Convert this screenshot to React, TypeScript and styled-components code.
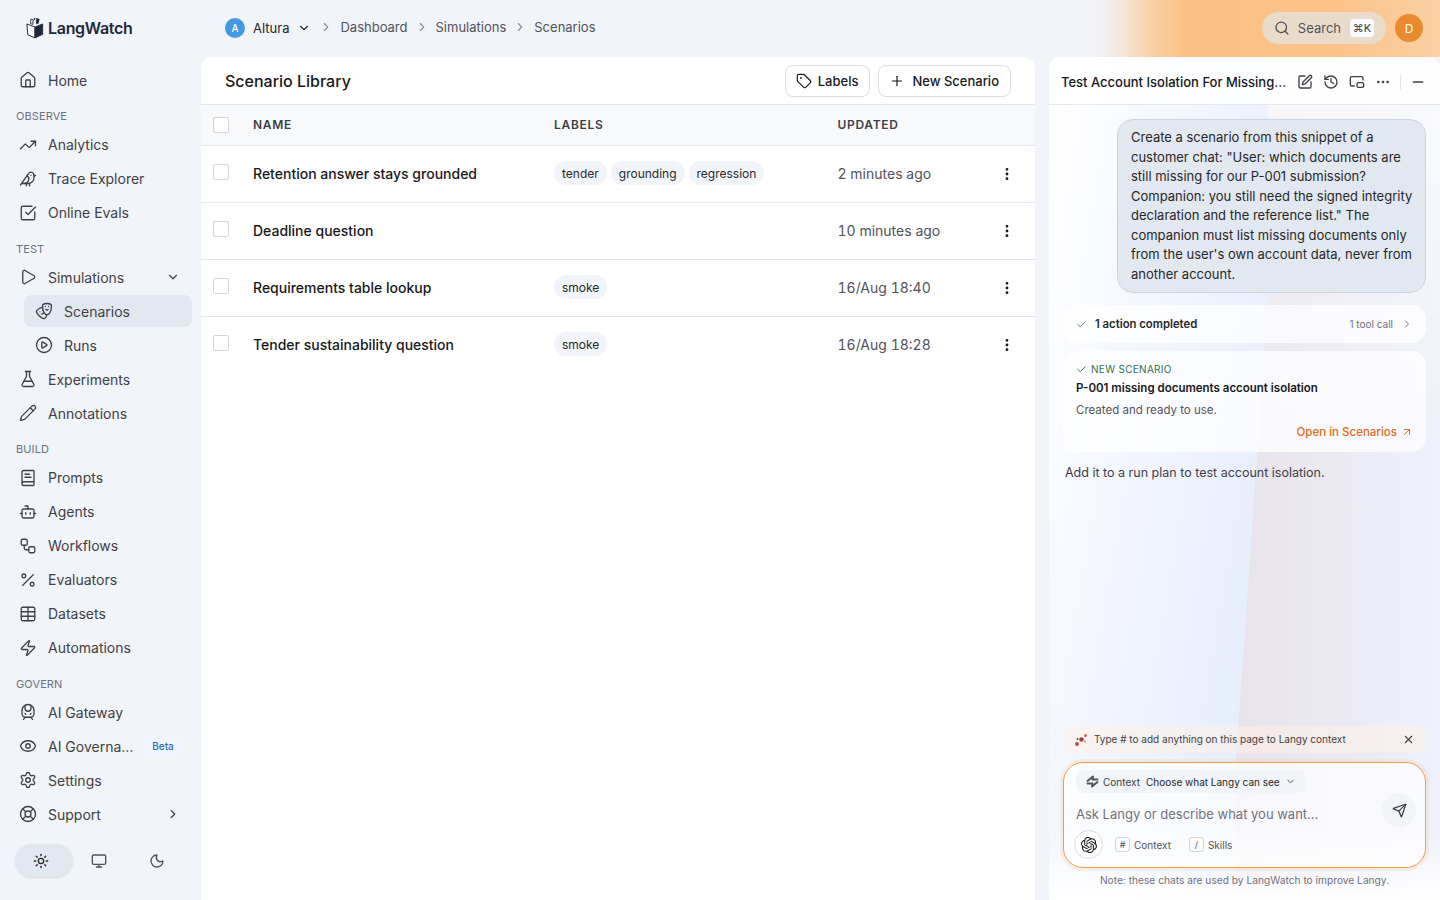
import React from "react";
import styled, { createGlobalStyle } from "styled-components";
import {
  ArrowUpRight,
  Bird,
  BookText,
  Bot,
  Check,
  ChevronDown,
  ChevronRight,
  CirclePlay,
  Drama,
  Ellipsis,
  EllipsisVertical,
  Eye,
  FlaskConical,
  History,
  House,
  LifeBuoy,
  Minus,
  Monitor,
  Moon,
  Pencil,
  Percent,
  PictureInPicture2,
  Play,
  Plus,
  Search,
  Send,
  Settings,
  SquareCheckBig,
  SquarePen,
  Sun,
  Table,
  Tag,
  TrainFront,
  TrendingUp,
  Workflow,
  X,
  Zap,
} from "lucide-react";
import { SiOpenai } from "react-icons/si";

const GlobalStyle = createGlobalStyle`
  html, body, #root {
    height: 100%;
  }
  body {
    margin: 0;
    background: #f1f4f9;
    color: #18181b;
    font-family: Inter, "Liberation Sans", sans-serif;
    overflow: hidden;
  }
  * {
    box-sizing: border-box;
  }
`;

const Page = styled.div`
  display: flex;
  height: 900px;
  width: 1440px;
  overflow: hidden;
`;

const Sidebar = styled.aside`
  width: 201px;
  flex-shrink: 0;
  display: flex;
  flex-direction: column;
`;

const LogoRow = styled.div`
  height: 63px;
  padding: 12px 0 0 26px;
  display: flex;
  align-items: flex-start;
  gap: 4px;
`;

const LogoText = styled.span`
  font-size: 16px;
  line-height: 32px;
  font-weight: 600;
  letter-spacing: -0.3px;
  color: #1e293b;
`;

const Nav = styled.nav`
  display: flex;
  flex-direction: column;
`;

const NavItem = styled.div<{ $sub?: boolean; $active?: boolean }>`
  height: 32px;
  margin: 1px 9px 1px ${(p) => (p.$sub ? "24px" : "8px")};
  padding: 0 12px 0 11px;
  display: flex;
  align-items: center;
  gap: 11px;
  border-radius: 8px;
  font-size: 14px;
  color: #3f3f46;
  background: ${(p) => (p.$active ? "#e2e8f0" : "transparent")};

  svg {
    flex-shrink: 0;
    color: #3f3f46;
  }
`;

const NavLabel = styled.span`
  flex: 1;
  min-width: 0;
  overflow: hidden;
  white-space: nowrap;
  text-overflow: ellipsis;
`;

const BetaBadge = styled.span`
  width: 34px;
  height: 18px;
  display: flex;
  align-items: center;
  justify-content: center;
  flex-shrink: 0;
  border-radius: 4px;
  font-size: 10px;
  font-weight: 500;
  color: #2b6cb0;
  background: #eff6ff;
`;

const SectionLabel = styled.div`
  height: 30.5px;
  padding: 12px 0 0 16px;
  font-size: 11px;
  line-height: 14px;
  color: #6b7280;
  letter-spacing: 0.1px;
`;

const ThemeSwitch = styled.div`
  margin: 13px 0 0 15px;
  display: flex;
`;

const ThemeOption = styled.div<{ $active?: boolean }>`
  width: 58px;
  height: 33px;
  padding-right: 6px;
  display: flex;
  align-items: center;
  justify-content: center;
  border-radius: 17px;
  background: ${(p) => (p.$active ? "#e2e8f0" : "transparent")};
  box-shadow: ${(p) => (p.$active ? "0 1px 2px rgba(15, 23, 42, 0.1)" : "none")};

  svg {
    color: ${(p) => (p.$active ? "#27272a" : "#52525b")};
  }
`;

const Content = styled.div`
  flex: 1;
  min-width: 0;
  display: flex;
  flex-direction: column;
`;

const Header = styled.header`
  position: relative;
  height: 57px;
  flex-shrink: 0;
  padding: 0 17px 1px 24px;
  display: flex;
  align-items: center;
  font-size: 13px;

  &::before {
    content: "";
    position: absolute;
    top: 0;
    bottom: 0;
    right: 0;
    width: 360px;
    background: linear-gradient(
      to right,
      rgba(253, 190, 120, 0) 0%,
      rgba(253, 190, 120, 0.05) 6%,
      rgba(253, 190, 120, 0.25) 12%,
      rgba(252, 188, 118, 0.65) 20%,
      rgba(252, 190, 125, 0.95) 30%,
      #fcc288 70%,
      #fbd0a4 100%
    );
  }
`;

const OrgAvatar = styled.span`
  width: 20px;
  height: 20px;
  margin-right: 8px;
  display: flex;
  align-items: center;
  justify-content: center;
  border-radius: 50%;
  background: #4299e1;
  color: #fff;
  font-size: 10px;
  font-weight: 500;
`;

const OrgName = styled.span`
  color: #27272a;
  margin-right: 8px;
`;

const Crumbs = styled.div`
  display: flex;
  align-items: center;
  gap: 7px;
  margin-left: 8px;
  color: #52525b;
  margin-top: -2px;

  svg {
    color: #8a8f98;
  }
`;

const HeaderRight = styled.div`
  position: relative;
  margin-left: auto;
  display: flex;
  align-items: center;
  gap: 9px;
`;

const SearchPill = styled.div`
  width: 124px;
  height: 32px;
  padding: 0 12px;
  display: flex;
  align-items: center;
  gap: 8px;
  border-radius: 16px;
  background: rgba(229, 223, 214, 0.85);
  color: #52525b;
`;

const Kbd = styled.span`
  margin-left: 1px;
  width: 24px;
  height: 18px;
  flex-shrink: 0;
  display: flex;
  align-items: center;
  justify-content: center;
  border-radius: 4px;
  background: #f8fafc;
  font-size: 11px;
  color: #3f3f46;
`;

const UserAvatar = styled.span`
  width: 28px;
  height: 28px;
  display: flex;
  align-items: center;
  justify-content: center;
  border-radius: 50%;
  background: #ea8a2e;
  color: #fff;
  font-size: 12px;
`;

const Panels = styled.div`
  flex: 1;
  min-height: 0;
  display: flex;
  gap: 14px;
`;

const MainCard = styled.main`
  width: 834px;
  flex-shrink: 0;
  background: #fff;
  border-radius: 12px 12px 0 0;
  overflow: hidden;
`;

const CardHeader = styled.div`
  height: 48px;
  padding: 0 24px;
  display: flex;
  align-items: center;
  gap: 8px;
  border-bottom: 1px solid #e4e7ec;
`;

const CardTitle = styled.h1`
  flex: 1;
  margin: 0;
  font-size: 16px;
  font-weight: 500;
  color: #18181b;
`;

const OutlineButton = styled.button<{ $gap: number }>`
  height: 32px;
  padding: 0 11px 0 10px;
  display: flex;
  align-items: center;
  gap: ${(p) => p.$gap}px;
  border: 1px solid #d9dee6;
  border-radius: 8px;
  background: #fff;
  font-family: inherit;
  font-size: 13px;
  font-weight: 500;
  color: #18181b;
`;

const columns = "52px 301px 283.5px 1fr 56px";

const HeadRow = styled.div`
  height: 41px;
  padding-bottom: 2px;
  display: grid;
  grid-template-columns: ${columns};
  align-items: center;
  background: #f8f9fb;
  border-bottom: 1px solid #e4e7ec;
  font-size: 12px;
  font-weight: 600;
  letter-spacing: 0.7px;
  color: #3f3f46;
`;

const Row = styled.div`
  height: 57px;
  padding-bottom: 2px;
  display: grid;
  grid-template-columns: ${columns};
  align-items: center;
  border-bottom: 1px solid #e4e7ec;
  font-size: 14px;

  &:last-child {
    border-bottom-color: transparent;
  }
`;

const CheckBox = styled.span<{ $head?: boolean }>`
  width: 16px;
  height: 16px;
  margin-left: 12px;
  margin-top: ${(p) => (p.$head ? "2px" : "0")};
  margin-bottom: ${(p) => (p.$head ? "0" : "2px")};
  border: 1px solid #d4d4d8;
  border-radius: 2px;
  background: #fff;
`;

const NameCell = styled.span`
  font-weight: 500;
  color: #18181b;
`;

const LabelsCell = styled.div`
  display: flex;
  gap: 4px;
`;

const LabelPill = styled.span`
  height: 24px;
  padding: 0 8px;
  display: flex;
  align-items: center;
  border-radius: 12px;
  background: #f1f4f9;
  font-size: 12px;
  color: #27272a;
`;

const UpdatedCell = styled.span`
  color: #52525b;
  font-variant-numeric: tabular-nums;
`;

const DotsCell = styled.div`
  margin-top: 2px;
  display: flex;
  justify-content: center;
  color: #18181b;
`;

const ChatPanel = styled.section`
  position: relative;
  flex: 1;
  min-width: 0;
  display: flex;
  flex-direction: column;
  border-radius: 12px 12px 0 0;
  overflow: hidden;
  background: linear-gradient(100deg, #ffffff 2%, #f3f6fe 28%, #e7eefc 54%);

  &::before {
    content: "";
    position: absolute;
    inset: 0;
    clip-path: polygon(219px 0, 100% 0, 100% 100%, 185px 100%, 187px 703px, 219px 243px);
    background:
      linear-gradient(to bottom, rgba(255, 255, 255, 0.75) 0, rgba(255, 255, 255, 0.25) 30%, rgba(255, 255, 255, 0) 46%),
      linear-gradient(to right, #f2e4df 0, #e8e3ec 50%, #eef1fb 100%);
  }

  &::after {
    content: "";
    position: absolute;
    left: 0;
    right: 0;
    bottom: 0;
    height: 70px;
    background: linear-gradient(to bottom, rgba(255, 255, 255, 0), #ffffff);
  }

  & > * {
    position: relative;
    z-index: 1;
  }
`;

const ChatHeader = styled.div`
  height: 48px;
  flex-shrink: 0;
  padding: 2px 0 0 12px;
  display: flex;
  align-items: center;
  border-bottom: 1px solid #e4e7ec;
  background: rgba(255, 255, 255, 0.8);
`;

const ChatTitle = styled.span`
  width: 228px;
  flex-shrink: 0;
  margin-right: 3px;
  overflow: hidden;
  white-space: nowrap;
  text-overflow: ellipsis;
  font-size: 13px;
  font-weight: 500;
  color: #18181b;
`;

const HeadIcon = styled.span`
  width: 26px;
  flex-shrink: 0;
  display: flex;
  justify-content: center;
  color: #3f3f46;
`;

const HeadDivider = styled.span`
  width: 1px;
  height: 16px;
  margin: 0 4px 0 4px;
  background: #e4e7ec;
`;

const Messages = styled.div`
  flex: 1;
  min-height: 0;
  padding: 14px 14px 0;
  display: flex;
  flex-direction: column;
`;

const UserBubble = styled.div`
  align-self: flex-end;
  width: 309px;
  padding: 8px 10px 8px 13px;
  border: 1px solid #cbd5e1;
  border-radius: 16px;
  background: #e2e8f0;
  font-size: 13px;
  line-height: 19.5px;
  color: #27272a;
`;

const ActionRow = styled.div`
  height: 38px;
  flex-shrink: 0;
  margin-top: 12px;
  padding: 0 13px;
  display: flex;
  align-items: center;
  border-radius: 14px;
  background: rgba(255, 255, 255, 0.72);
  font-size: 11.3px;
  font-weight: 600;
  color: #27272a;

  svg {
    color: #3d7a5c;
  }
`;

const ActionTitle = styled.span`
  margin-left: 8px;
  flex: 1;
`;

const ToolCount = styled.span`
  margin-right: 8px;
  font-size: 10px;
  font-weight: 400;
  color: #71717a;
`;

const ResultCard = styled.div`
  margin-top: 8px;
  height: 101px;
  flex-shrink: 0;
  padding: 11px 13px 0;
  border-radius: 14px;
  background: rgba(255, 255, 255, 0.72);
`;

const ResultKicker = styled.div`
  display: flex;
  align-items: center;
  gap: 4px;
  font-size: 10px;
  line-height: 14px;
  letter-spacing: 0.3px;
  color: #2f6f52;
`;

const ResultTitle = styled.div`
  margin-top: 4px;
  font-size: 11.5px;
  line-height: 16px;
  font-weight: 600;
  color: #18181b;
`;

const ResultText = styled.div`
  margin-top: 6px;
  font-size: 11.5px;
  line-height: 16px;
  color: #52525b;
`;

const ResultLink = styled.div`
  margin-top: 6px;
  display: flex;
  align-items: center;
  justify-content: flex-end;
  gap: 4px;
  font-size: 11.5px;
  line-height: 16px;
  font-weight: 500;
  color: #dd6b20;
`;

const Reply = styled.p`
  margin: 12px 0 0 2px;
  font-size: 12.5px;
  line-height: 18px;
  color: #3f3f46;
`;

const Composer = styled.div`
  padding: 0 14px;
`;

const Tip = styled.div`
  height: 27px;
  padding: 0 11px;
  display: flex;
  align-items: center;
  gap: 6px;
  border-radius: 8px;
  background: rgba(253, 240, 230, 0.55);
  font-size: 10px;
  color: #3f3f46;
`;

const TipText = styled.span`
  flex: 1;
  margin-top: -1px;
`;

const InputBox = styled.div`
  height: 106px;
  margin-top: 9px;
  padding: 7px 9px 0 12px;
  border: 1.5px solid #ed9c4f;
  border-radius: 20px;
  box-shadow: 0 0 0 3px rgba(253, 200, 150, 0.25);
  background: rgba(255, 255, 255, 0.72);
  display: flex;
  flex-direction: column;
`;

const ContextChip = styled.div`
  width: 230px;
  height: 23px;
  flex-shrink: 0;
  padding: 0 10px;
  display: flex;
  align-items: center;
  gap: 4px;
  border-radius: 8px;
  background: #f1f4f9;
  font-size: 10px;
  white-space: nowrap;
  color: #3f3f46;
  svg {
    flex-shrink: 0;
    color: #52525b;
  }
`;

const ChipValue = styled.span`
  margin: 0 1px 0 2px;
  color: #27272a;
`;

const InputRow = styled.div`
  flex: 1;
  display: flex;
  align-items: flex-start;
  justify-content: space-between;
`;

const Placeholder = styled.span`
  margin-top: 12px;
  font-size: 13px;
  line-height: 18px;
  color: #71717a;
`;

const SendButton = styled.span`
  width: 34px;
  height: 34px;
  display: flex;
  align-items: center;
  justify-content: center;
  border-radius: 50%;
  background: #f1f4f9;
  color: #3f3f46;
`;

const Toolbar = styled.div`
  margin: 0 0 8px -2px;
  display: flex;
  align-items: center;
`;

const ModelButton = styled.span`
  width: 29px;
  height: 29px;
  margin-right: 12px;
  display: flex;
  align-items: center;
  justify-content: center;
  border: 1px solid #d9dee6;
  border-radius: 50%;
  background: #fff;
  color: #18181b;
`;

const ToolKey = styled.span`
  width: 15px;
  height: 15px;
  margin-right: 4px;
  display: flex;
  align-items: center;
  justify-content: center;
  border: 1px solid #d4d4d8;
  border-radius: 3px;
  font-size: 9px;
  color: #52525b;
`;

const ToolLabel = styled.span`
  margin-right: 18px;
  font-size: 10px;
  color: #52525b;
`;

const Note = styled.div`
  height: 32px;
  padding-top: 6px;
  text-align: center;
  font-size: 10.2px;
  line-height: 13px;
  color: #71717a;
`;

function LogoMark() {
  return (
    <svg width="18" height="22" viewBox="0 0 20 24" fill="none" style={{ marginTop: 5 }}>
      <path d="M1 7.5 L10 11 V23 L2 19.5 Z" fill="#fff" stroke="#1e293b" strokeWidth="1.1" strokeLinejoin="round" />
      <path d="M10 11 L18.5 7.5 V19 L10 23 Z" fill="#1e293b" stroke="#1e293b" strokeWidth="1" strokeLinejoin="round" />
      <path d="M5 7 L5.5 2 L8 3 L7.5 8 Z" fill="#fff" stroke="#1e293b" strokeWidth="1" strokeLinejoin="round" />
      <path d="M11 7.5 L11.5 1 L15 2 L14 7 Z" fill="#1e293b" />
      <circle cx="9.5" cy="2" r="1" fill="#1e293b" />
    </svg>
  );
}

function LangySpark() {
  return (
    <svg width="14" height="14" viewBox="0 0 14 14" fill="none" style={{ flexShrink: 0 }}>
      <circle cx="3" cy="11" r="2" fill="#b4534a" />
      <circle cx="7.5" cy="6.5" r="2.2" fill="#a33d3d" />
      <circle cx="11.5" cy="2.5" r="1.5" fill="#c4694f" />
      <circle cx="3.5" cy="6" r="1" fill="#7a4a4a" />
      <circle cx="11" cy="8.5" r="1" fill="#d98a5f" />
    </svg>
  );
}

function ContextGlyph() {
  return (
    <svg width="13" height="13" viewBox="0 0 13 13" fill="none" stroke="#52525b" strokeWidth="1.9" strokeLinejoin="round" strokeLinecap="round">
      <path d="M1.5 6 L7 1.5 L6.5 4.5 L11.5 4.5" />
      <path d="M11.5 7 L6 11.5 L6.5 8.5 L1.5 8.5" />
    </svg>
  );
}

type NavEntry = { label: string; icon: React.ReactNode; sub?: boolean; active?: boolean; trail?: React.ReactNode };

const ic = (I: typeof House) => <I size={18} strokeWidth={1.75} />;

const observe: NavEntry[] = [
  { label: "Analytics", icon: ic(TrendingUp) },
  { label: "Trace Explorer", icon: ic(Bird) },
  { label: "Online Evals", icon: ic(SquareCheckBig) },
];

const test: NavEntry[] = [
  { label: "Simulations", icon: ic(Play), trail: <ChevronDown size={14} /> },
  { label: "Scenarios", icon: ic(Drama), sub: true, active: true },
  { label: "Runs", icon: ic(CirclePlay), sub: true },
  { label: "Experiments", icon: ic(FlaskConical) },
  { label: "Annotations", icon: ic(Pencil) },
];

const build: NavEntry[] = [
  { label: "Prompts", icon: ic(BookText) },
  { label: "Agents", icon: ic(Bot) },
  { label: "Workflows", icon: ic(Workflow) },
  { label: "Evaluators", icon: ic(Percent) },
  { label: "Datasets", icon: ic(Table) },
  { label: "Automations", icon: ic(Zap) },
];

const govern: NavEntry[] = [
  { label: "AI Gateway", icon: ic(TrainFront) },
  { label: "AI Governance", icon: ic(Eye), trail: <BetaBadge>Beta</BetaBadge> },
  { label: "Settings", icon: ic(Settings) },
  { label: "Support", icon: ic(LifeBuoy), trail: <ChevronRight size={14} /> },
];

function NavGroup({ items }: { items: NavEntry[] }) {
  return (
    <>
      {items.map((item) => (
        <NavItem key={item.label} $sub={item.sub} $active={item.active}>
          {item.icon}
          <NavLabel>{item.label}</NavLabel>
          {item.trail}
        </NavItem>
      ))}
    </>
  );
}

const scenarios = [
  { name: "Retention answer stays grounded", labels: ["tender", "grounding", "regression"], updated: "2 minutes ago" },
  { name: "Deadline question", labels: [], updated: "10 minutes ago" },
  { name: "Requirements table lookup", labels: ["smoke"], updated: "16/Aug 18:40" },
  { name: "Tender sustainability question", labels: ["smoke"], updated: "16/Aug 18:28" },
];

export default function App() {
  return (
    <Page>
      <GlobalStyle />
      <Sidebar>
        <LogoRow>
          <LogoMark />
          <LogoText>LangWatch</LogoText>
        </LogoRow>
        <Nav>
          <NavGroup items={[{ label: "Home", icon: ic(House) }]} />
          <SectionLabel>OBSERVE</SectionLabel>
          <NavGroup items={observe} />
          <SectionLabel>TEST</SectionLabel>
          <NavGroup items={test} />
          <SectionLabel>BUILD</SectionLabel>
          <NavGroup items={build} />
          <SectionLabel>GOVERN</SectionLabel>
          <NavGroup items={govern} />
        </Nav>
        <ThemeSwitch>
          <ThemeOption $active>
            <Sun size={16} />
          </ThemeOption>
          <ThemeOption>
            <Monitor size={16} />
          </ThemeOption>
          <ThemeOption>
            <Moon size={16} />
          </ThemeOption>
        </ThemeSwitch>
      </Sidebar>
      <Content>
        <Header>
          <OrgAvatar>A</OrgAvatar>
          <OrgName>Altura</OrgName>
          <ChevronDown size={14} color="#27272a" />
          <Crumbs>
            <ChevronRight size={14} />
            <span>Dashboard</span>
            <ChevronRight size={14} />
            <span>Simulations</span>
            <ChevronRight size={14} />
            <span>Scenarios</span>
          </Crumbs>
          <HeaderRight>
            <SearchPill>
              <Search size={16} />
              <span>Search</span>
              <Kbd>⌘K</Kbd>
            </SearchPill>
            <UserAvatar>D</UserAvatar>
          </HeaderRight>
        </Header>
        <Panels>
          <MainCard>
            <CardHeader>
              <CardTitle>Scenario Library</CardTitle>
              <OutlineButton $gap={6}>
                <Tag size={16} strokeWidth={1.75} />
                Labels
              </OutlineButton>
              <OutlineButton $gap={7}>
                <Plus size={16} strokeWidth={1.75} />
                New Scenario
              </OutlineButton>
            </CardHeader>
            <HeadRow>
              <CheckBox $head />
              <span>NAME</span>
              <span>LABELS</span>
              <span>UPDATED</span>
              <span />
            </HeadRow>
            {scenarios.map((s) => (
              <Row key={s.name}>
                <CheckBox />
                <NameCell>{s.name}</NameCell>
                <LabelsCell>
                  {s.labels.map((l) => (
                    <LabelPill key={l}>{l}</LabelPill>
                  ))}
                </LabelsCell>
                <UpdatedCell>{s.updated}</UpdatedCell>
                <DotsCell>
                  <EllipsisVertical size={16} strokeWidth={2.25} />
                </DotsCell>
              </Row>
            ))}
          </MainCard>
          <ChatPanel>
            <ChatHeader>
              <ChatTitle>Test Account Isolation For Missing Documents</ChatTitle>
              <HeadIcon>
                <SquarePen size={16} />
              </HeadIcon>
              <HeadIcon>
                <History size={16} />
              </HeadIcon>
              <HeadIcon>
                <PictureInPicture2 size={16} />
              </HeadIcon>
              <HeadIcon>
                <Ellipsis size={16} />
              </HeadIcon>
              <HeadDivider />
              <HeadIcon>
                <Minus size={16} />
              </HeadIcon>
            </ChatHeader>
            <Messages>
              <UserBubble>
                Create a scenario from this snippet of a customer chat: "User: which documents are still missing for our
                P-001 submission? Companion: you still need the signed integrity declaration and the reference list." The
                companion must list missing documents only from the user's own account data, never from another account.
              </UserBubble>
              <ActionRow>
                <Check size={11} />
                <ActionTitle>1 action completed</ActionTitle>
                <ToolCount>1 tool call</ToolCount>
                <ChevronRight size={12} color="#71717a" />
              </ActionRow>
              <ResultCard>
                <ResultKicker>
                  <Check size={11} />
                  NEW SCENARIO
                </ResultKicker>
                <ResultTitle>P-001 missing documents account isolation</ResultTitle>
                <ResultText>Created and ready to use.</ResultText>
                <ResultLink>
                  Open in Scenarios
                  <ArrowUpRight size={12} />
                </ResultLink>
              </ResultCard>
              <Reply>Add it to a run plan to test account isolation.</Reply>
            </Messages>
            <Composer>
              <Tip>
                <LangySpark />
                <TipText>Type # to add anything on this page to Langy context</TipText>
                <X size={13} />
              </Tip>
              <InputBox>
                <ContextChip>
                  <ContextGlyph />
                  <span>Context</span>
                  <ChipValue>Choose what Langy can see</ChipValue>
                  <ChevronDown size={11} />
                </ContextChip>
                <InputRow>
                  <Placeholder>Ask Langy or describe what you want...</Placeholder>
                  <SendButton>
                    <Send size={15} />
                  </SendButton>
                </InputRow>
                <Toolbar>
                  <ModelButton>
                    <SiOpenai size={16} />
                  </ModelButton>
                  <ToolKey>#</ToolKey>
                  <ToolLabel>Context</ToolLabel>
                  <ToolKey>/</ToolKey>
                  <ToolLabel>Skills</ToolLabel>
                </Toolbar>
              </InputBox>
              <Note>Note: these chats are used by LangWatch to improve Langy.</Note>
            </Composer>
          </ChatPanel>
        </Panels>
      </Content>
    </Page>
  );
}
